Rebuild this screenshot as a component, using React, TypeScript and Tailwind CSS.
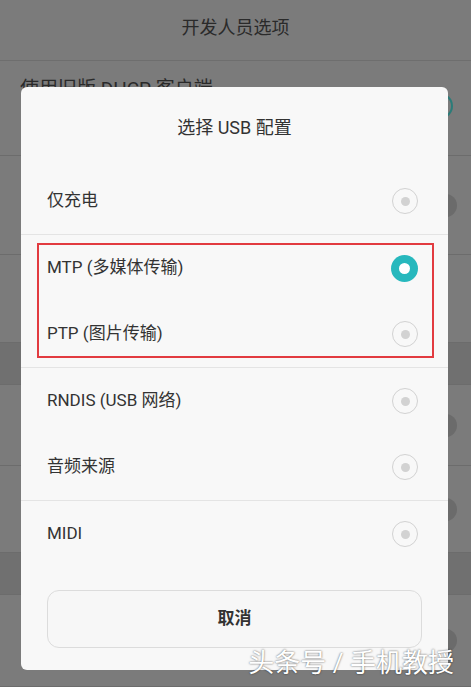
import type { ReactNode } from "react";

type Option = { label: string; selected?: boolean };

// groups of USB modes, each group split by a thin line
const groups: Option[][] = [
  [{ label: "仅充电" }],
  [{ label: "MTP (多媒体传输)", selected: true }, { label: "PTP (图片传输)" }],
  [{ label: "RNDIS (USB 网络)" }, { label: "音频来源" }],
  [{ label: "MIDI" }],
];

function Radio({ selected }: { selected?: boolean }) {
  if (selected) {
    return (
      <div className="w-[27px] h-[27px] rounded-full bg-[#27b8bd] flex items-center justify-center">
        <div className="w-[11px] h-[11px] rounded-full bg-white" />
      </div>
    );
  }
  return (
    <div className="w-[26px] h-[26px] rounded-full border-[1.5px] border-[#d2d2d2] flex items-center justify-center">
      <div className="w-[9px] h-[9px] rounded-full bg-[#d2d2d2]" />
    </div>
  );
}

function OptionRow({ option }: { option: Option }) {
  return (
    <div className="h-[66px] flex items-center justify-between pl-[26px] pr-[30px]">
      <span className="text-[17px] text-[#333333]">{option.label}</span>
      <Radio selected={option.selected} />
    </div>
  );
}

// dimmed settings row behind the dialog
function BgRow({ h, children, band }: { h: string; children?: ReactNode; band?: boolean }) {
  return (
    <div
      className={`${h} flex items-center justify-end pr-[14px] border-b border-[#6c6c6c] ${
        band ? "bg-[#707070]" : ""
      }`}
    >
      {children}
    </div>
  );
}

function BgDot() {
  return <div className="w-[23px] h-[23px] rounded-full bg-[#6b6b6b]" />;
}

export default function App() {
  return (
    <div
      className="relative w-[471px] h-[687px] overflow-hidden bg-[#7b7b7b]"
      style={{ fontFamily: 'Roboto, "Noto Sans CJK SC", sans-serif' }}
    >
      {/* page behind the dialog */}
      <div className="flex flex-col">
        <div className="h-[61px] flex items-center justify-center border-b border-[#6e6e6e]">
          <span className="text-[18px] text-[#2a2a2a] pb-[6px]">开发人员选项</span>
        </div>
        <div className="h-[95px] flex justify-between border-b border-[#6c6c6c] pl-[20px] pr-[18px]">
          <span className="pt-[16px] text-[19px] leading-[24px] text-[#2a2a2a]">使用旧版 DHCP 客户端</span>
          <div className="self-center mb-[4px] w-[26px] h-[26px] rounded-full border-2 border-[#2b7c79]" />
        </div>
        <BgRow h="h-[99px]">
          <BgDot />
        </BgRow>
        <BgRow h="h-[88px]" />
        <BgRow h="h-[42px]" band />
        <BgRow h="h-[81px]">
          <BgDot />
        </BgRow>
        <BgRow h="h-[87px]">
          <BgDot />
        </BgRow>
        <BgRow h="h-[42px]" band />
        <BgRow h="h-[92px]">
          <BgDot />
        </BgRow>
      </div>

      {/* USB config dialog */}
      <div className="absolute left-[21px] top-[87px] w-[427px] h-[583px] rounded-[6px] bg-[#f8f8f8] flex flex-col">
        <div className="h-[81px] flex items-center justify-center">
          <span className="text-[18px] text-[#333333]">选择 USB 配置</span>
        </div>
        {groups.map((group, i) => (
          <div key={i} className={`relative ${i < groups.length - 1 ? "border-b border-[#e4e4e4]" : ""}`}>
            {group.map((opt) => (
              <OptionRow key={opt.label} option={opt} />
            ))}
            {i === 1 && (
              <div className="absolute left-[16px] right-[14px] top-[8px] bottom-[9px] border-2 border-[#e23b40]" />
            )}
          </div>
        ))}
        <button className="mt-[23px] mx-[26px] h-[58px] rounded-[12px] border border-[#dcdcdc] bg-[#f7f7f7] text-[17px] font-semibold text-[#333333]">
          取消
        </button>
      </div>

      {/* watermark */}
      <div className="absolute right-[17px] top-[647px] text-[26px] leading-[32px] text-white [text-shadow:0_0_2px_rgba(0,0,0,0.7)]">
        头条号 / 手机教授
      </div>
    </div>
  );
}
